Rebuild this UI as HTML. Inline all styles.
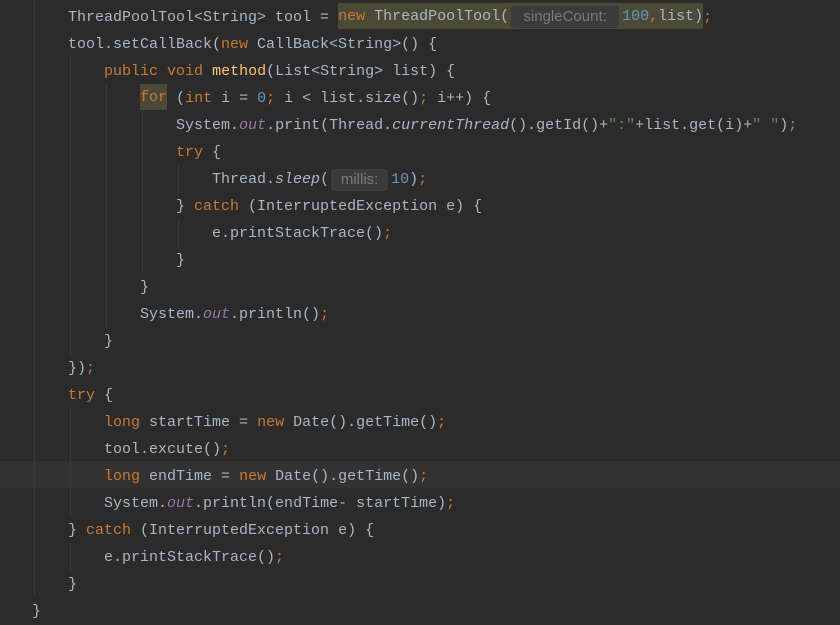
<!DOCTYPE html>
<html><head><meta charset="utf-8"><style>
html,body{margin:0;padding:0;background:#2b2b2b;width:840px;height:625px;overflow:hidden}
#ed{position:relative;width:840px;height:625px;font-family:"Liberation Mono","Noto Sans CJK SC",monospace;font-size:15px;color:#a9b7c6}
.l{position:absolute;left:32px;height:27px;line-height:27px;white-space:pre}
.k{color:#cc7832}.m{color:#ffc66d}.f{color:#9876aa;font-style:italic}.i{font-style:italic}.n{color:#6897bb}.s{color:#6a8759}
.h{display:inline-block;background:#3b3b3b;color:#7a7a7a;font-family:"Liberation Sans",sans-serif;font-size:15px;border-radius:3px;height:22px;line-height:22px;vertical-align:top;margin:3px 3px 0 2px;text-align:center}
.hl{background:#4b4a37;display:inline-block;height:26px;vertical-align:top;margin-top:-1px;line-height:27px}
.g{position:absolute;width:1px;background:#393939}
.cur{position:absolute;left:0;top:461px;width:840px;height:27px;background:#323232}
</style></head><body><div id="ed">
<div class="cur"></div>
<div class="g" style="left:34px;top:0;height:595px"></div>
<div class="g" style="left:70px;top:57px;height:300px"></div>
<div class="g" style="left:106px;top:84px;height:246px"></div>
<div class="g" style="left:142px;top:111px;height:160px"></div>
<div class="g" style="left:178px;top:165px;height:30px"></div>
<div class="g" style="left:178px;top:219px;height:30px"></div>
<div class="g" style="left:70px;top:407px;height:110px"></div>
<div class="g" style="left:70px;top:543px;height:30px"></div>
<div class="l" style="top:4px">    ThreadPoolTool&lt;String&gt; tool = <span class="hl"><span class="k">new</span> ThreadPoolTool(<span class="h" style="width:108px">singleCount:</span><span class="n">100</span><span class="k">,</span>list)</span><span class="k">;</span></div>
<div class="l" style="top:31px">    tool.setCallBack(<span class="k">new</span> CallBack&lt;String&gt;() {</div>
<div class="l" style="top:58px">        <span class="k">public void</span> <span class="m">method</span>(List&lt;String&gt; list) {</div>
<div class="l" style="top:85px">            <span class="k hl">for</span> (<span class="k">int</span> i = <span class="n">0</span><span class="k">;</span> i &lt; list.size()<span class="k">;</span> i++) {</div>
<div class="l" style="top:112px">                System.<span class="f">out</span>.print(Thread.<span class="i">currentThread</span>().getId()+<span class="s">":"</span>+list.get(i)+<span class="s">" "</span>)<span class="k">;</span></div>
<div class="l" style="top:139px">                <span class="k">try</span> {</div>
<div class="l" style="top:166px">                    Thread.<span class="i">sleep</span>(<span class="h" style="width:57px">millis:</span><span class="n">10</span>)<span class="k">;</span></div>
<div class="l" style="top:193px">                } <span class="k">catch</span> (InterruptedException e) {</div>
<div class="l" style="top:220px">                    e.printStackTrace()<span class="k">;</span></div>
<div class="l" style="top:247px">                }</div>
<div class="l" style="top:274px">            }</div>
<div class="l" style="top:301px">            System.<span class="f">out</span>.println()<span class="k">;</span></div>
<div class="l" style="top:328px">        }</div>
<div class="l" style="top:355px">    })<span class="k">;</span></div>
<div class="l" style="top:382px">    <span class="k">try</span> {</div>
<div class="l" style="top:409px">        <span class="k">long</span> startTime = <span class="k">new</span> Date().getTime()<span class="k">;</span></div>
<div class="l" style="top:436px">        tool.excute()<span class="k">;</span></div>
<div class="l" style="top:463px">        <span class="k">long</span> endTime = <span class="k">new</span> Date().getTime()<span class="k">;</span></div>
<div class="l" style="top:490px">        System.<span class="f">out</span>.println(endTime- startTime)<span class="k">;</span></div>
<div class="l" style="top:517px">    } <span class="k">catch</span> (InterruptedException e) {</div>
<div class="l" style="top:544px">        e.printStackTrace()<span class="k">;</span></div>
<div class="l" style="top:571px">    }</div>
<div class="l" style="top:598px">}</div>
</div></body></html>
